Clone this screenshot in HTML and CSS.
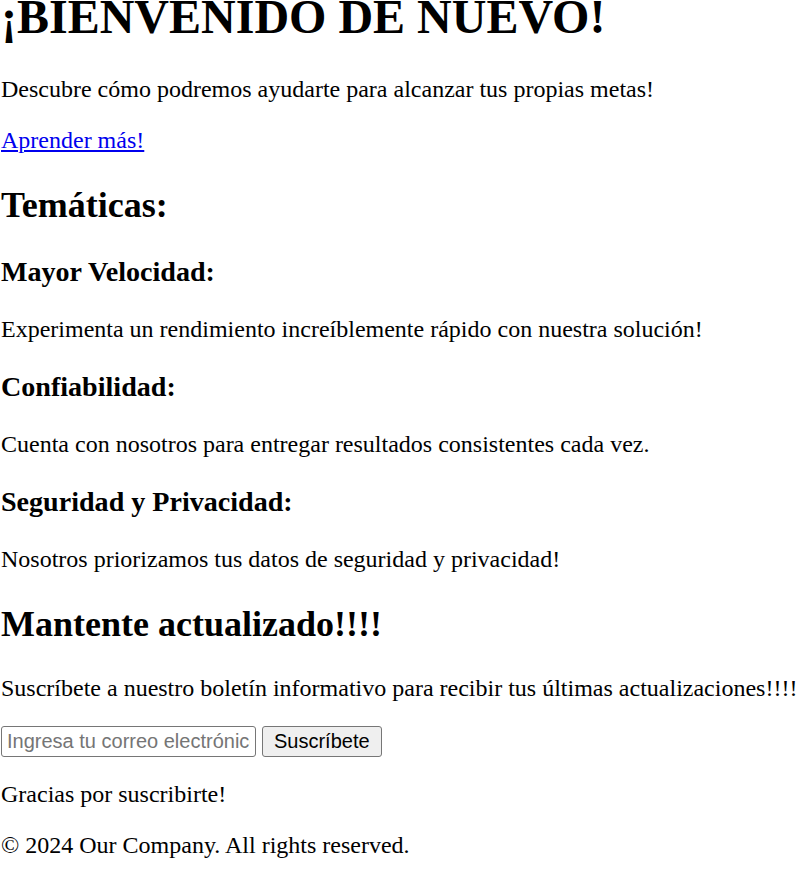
FILE: index.html
```html
<!DOCTYPE html>
<html lang="es">
<head>
<meta charset="utf-8">
<title>Bienvenido</title>
<link rel="stylesheet" href="styles.css">
</head>
<body>
<header class="hero">
<h1 class="hero-title">¡BIENVENIDO DE NUEVO!</h1>
<p>Descubre cómo podremos ayudarte para alcanzar tus propias metas!</p>
<p><a href="#" class="link">Aprender más!</a></p>
</header>
<section class="topics">
<h2>Temáticas:</h2>
<h3>Mayor Velocidad:</h3>
<p>Experimenta un rendimiento increíblemente rápido con nuestra solución!</p>
<h3>Confiabilidad:</h3>
<p>Cuenta con nosotros para entregar resultados consistentes cada vez.</p>
<h3>Seguridad y Privacidad:</h3>
<p>Nosotros priorizamos tus datos de seguridad y privacidad!</p>
</section>
<section class="newsletter">
<h2>Mantente actualizado!!!!</h2>
<p>Suscríbete a nuestro boletín informativo para recibir tus últimas actualizaciones!!!!</p>
<form class="sub-form">
<input class="email" type="email" placeholder="Ingresa tu correo electrónico">
<button class="btn" type="button">Suscríbete</button>
</form>
<p>Gracias por suscribirte!</p>
</section>
<footer class="footer">
<p>© 2024 Our Company. All rights reserved.</p>
</footer>
</body>
</html>
```
FILE: styles.css
```css
html, body {
  background: #fff;
}
body {
  margin: 0;
  padding-left: 1px;
  font-family: "Liberation Serif", "Times New Roman", serif;
  font-size: 24px;
  color: #000;
}
.hero-title {
  margin-top: -11px;
}
.link {
  color: #0000ee;
}
.sub-form {
  margin: 0;
}
.email {
  box-sizing: border-box;
  width: 255px;
  height: 31px;
  margin: 0;
  padding: 3px 5px;
  border: 1px solid #767676;
  border-radius: 3px;
  font-family: "Liberation Sans", Arial, sans-serif;
  font-size: 20px;
  color: #000;
  background: #fff;
}
.email::placeholder {
  color: #757575;
}
.btn {
  box-sizing: border-box;
  height: 31px;
  margin: 0;
  padding: 3px 11px;
  border: 1px solid #767676;
  border-radius: 3px;
  background: #efefef;
  font-family: "Liberation Sans", Arial, sans-serif;
  font-size: 20px;
  color: #000;
}
.footer p {
  margin-bottom: 0;
}
```
